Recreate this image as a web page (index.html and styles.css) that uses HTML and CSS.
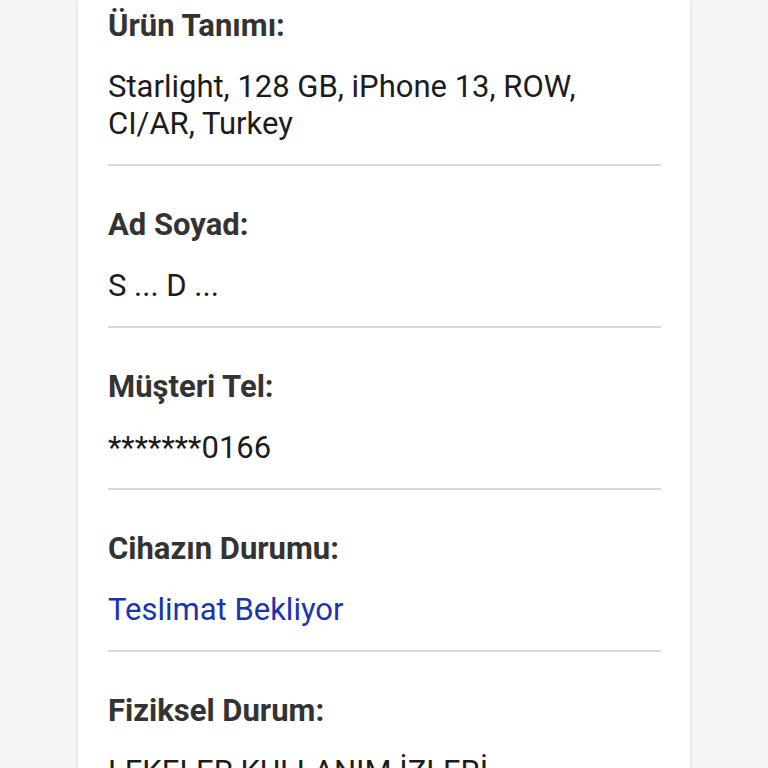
FILE: index.html
```html
<!DOCTYPE html>
<html lang="tr">
<head>
<meta charset="utf-8">
<link rel="stylesheet" href="styles.css">
</head>
<body>
<div class="page">
  <div class="card">
    <div class="item first">
      <div class="label">Ürün Tanımı:</div>
      <div class="value">Starlight, 128 GB, iPhone 13, ROW, CI/AR, Turkey</div>
    </div>
    <div class="item">
      <div class="label">Ad Soyad:</div>
      <div class="value">S ... D ...</div>
    </div>
    <div class="item">
      <div class="label">Müşteri Tel:</div>
      <div class="value">*******0166</div>
    </div>
    <div class="item">
      <div class="label">Cihazın Durumu:</div>
      <div class="value status">Teslimat Bekliyor</div>
    </div>
    <div class="item">
      <div class="label">Fiziksel Durum:</div>
      <div class="value">LEKELER KULLANIM İZLERİ</div>
    </div>
  </div>
</div>
</body>
</html>
```
FILE: styles.css
```css
html, body {
  margin: 0;
  padding: 0;
  background: #f4f4f4;
  font-family: Roboto, "Noto Sans", sans-serif;
  height: 768px;
  overflow: hidden;
}
.page {
  display: flex;
  justify-content: center;
}
.card {
  width: 612px;
  background: #ffffff;
  box-shadow: 0 0 4px rgba(0,0,0,0.12);
  padding: 0 29px 0 30px;
  box-sizing: border-box;
  min-height: 800px;
}
.item {
  padding: 40px 0 22px;
  border-bottom: 2px solid #d8d8d8;
}
.item.first {
  padding-top: 7px;
}
.label {
  font-size: 31px;
  line-height: 37px;
  font-weight: 700;
  color: #333333;
}
.value {
  margin-top: 24px;
  font-size: 31px;
  line-height: 37px;
  color: #1c1c1c;
}
.value.status {
  color: #1a34b0;
}
```
